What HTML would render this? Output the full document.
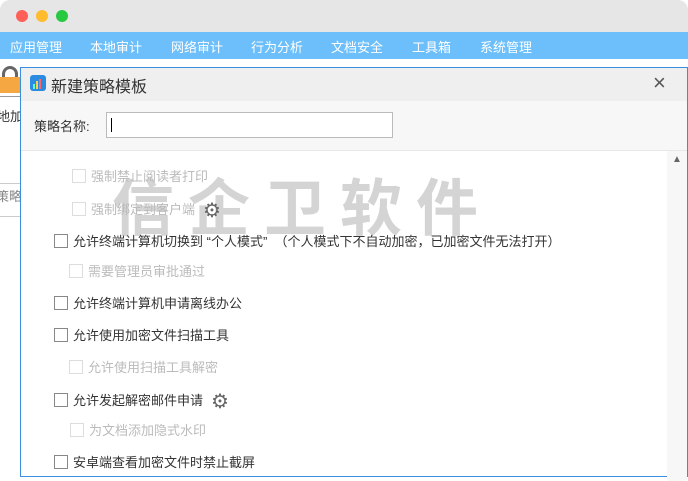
<!DOCTYPE html>
<html><head><meta charset="utf-8"><style>
*{margin:0;padding:0;box-sizing:border-box}
body{width:688px;height:475px;overflow:hidden;background:#fff;font-family:"Liberation Sans","Noto Sans CJK SC",sans-serif;position:relative}
.abs{position:absolute}
.top{left:0;top:0;width:688px;height:32px;background:#e6e6e6;border-radius:10px 10px 0 0}
.dot{width:12px;height:12px;border-radius:50%;top:10px}
.nav{left:0;top:32px;width:688px;height:27px;background:#6cbffa}
.nav span{position:absolute;top:5px;color:#fff;font-size:13px}
.dlg{left:20px;top:67px;width:668px;height:410px;border:1px solid #3a8ee0;background:#fff}
.row{position:absolute;font-size:13px;color:#333;white-space:pre}
.row i{display:inline-block;width:14px;height:14px;border:1px solid #888;vertical-align:-2px;margin-right:5px;background:#fff}
.dis{color:#bbb}
.dis i{border-color:#ddd}
.gear{display:inline-block;font-size:20px;color:#666;vertical-align:-3px;margin-left:8px}
</style></head><body>
<div class="abs top"></div>
<div class="abs dot" style="left:16px;background:#fe5f57"></div>
<div class="abs dot" style="left:36px;background:#febc2e"></div>
<div class="abs dot" style="left:56px;background:#28c840"></div>
<div class="abs nav">
<span style="left:10px">应用管理</span><span style="left:90px">本地审计</span><span style="left:171px">网络审计</span><span style="left:251px">行为分析</span><span style="left:331px">文档安全</span><span style="left:412px">工具箱</span><span style="left:480px">系统管理</span>
</div>
<div class="abs" style="left:2px;top:66px;width:16px;height:12px;border:3px solid #666;border-bottom:none;border-radius:8px 8px 0 0"></div>
<div class="abs" style="left:0;top:77px;width:20px;height:16px;background:#f5a742"></div>
<div class="abs" style="left:0;top:96px;width:20px;height:1px;background:#999"></div>
<div class="abs" style="left:-3px;top:106px;font-size:13px;color:#333">地加</div>
<div class="abs" style="left:0;top:183px;width:20px;height:1px;background:#ccc"></div>
<div class="abs" style="left:-4px;top:186px;font-size:13px;color:#888">策略</div>
<div class="abs" style="left:0;top:216px;width:20px;height:1px;background:#ccc"></div>
<div class="abs dlg">
<div class="abs" style="left:0;top:0;width:666px;height:33px;background:#efefef"></div>
<div class="abs" style="left:9px;top:7px;width:16px;height:16px;border-radius:3px;background:#2a8be0"></div>
<div class="abs" style="left:12px;top:16px;width:2px;height:5px;background:#5fd"></div>
<div class="abs" style="left:15px;top:13px;width:2px;height:8px;background:#fc5"></div>
<div class="abs" style="left:18px;top:11px;width:2px;height:10px;background:#f66"></div>
<div class="abs" style="left:30px;top:5px;font-size:16px;color:#333">新建策略模板</div>
<div class="abs" style="left:632px;top:2px;font-size:22px;color:#555;font-weight:300">×</div>
<div class="abs" style="left:0;top:33px;width:666px;height:50px;background:#f7f7f7;border-bottom:1px solid #e8e8e8"></div>
<div class="abs" style="left:13px;top:48px;font-size:13px;color:#333">策略名称:</div>
<div class="abs" style="left:85px;top:44px;width:287px;height:26px;border:1px solid #bbb;background:#fff"></div>
<div class="abs" style="left:90px;top:50px;width:1px;height:14px;background:#000"></div>
<div class="abs" style="left:646px;top:83px;width:20px;height:330px;background:#f7f7f7"></div>
<div class="abs" style="left:651px;top:86px;font-size:10px;color:#666">▲</div>
</div>
<div class="abs" style="left:112px;top:158px;font-size:62px;font-weight:bold;color:rgba(160,160,160,0.45);letter-spacing:14px;white-space:nowrap">信企卫软件</div>
<div class="row dis" style="left:72px;top:166px"><i></i>强制禁止阅读者打印</div>
<div class="row dis" style="left:72px;top:198px"><i></i>强制绑定到客户端<span class="gear">⚙</span></div>
<div class="row" style="left:54px;top:231px"><i></i>允许终端计算机切换到 “个人模式”  （个人模式下不自动加密，已加密文件无法打开）</div>
<div class="row dis" style="left:69px;top:261px"><i></i>需要管理员审批通过</div>
<div class="row" style="left:54px;top:293px"><i></i>允许终端计算机申请离线办公</div>
<div class="row" style="left:54px;top:325px"><i></i>允许使用加密文件扫描工具</div>
<div class="row dis" style="left:69px;top:357px"><i></i>允许使用扫描工具解密</div>
<div class="row" style="left:54px;top:389px"><i></i>允许发起解密邮件申请<span class="gear">⚙</span></div>
<div class="row dis" style="left:70px;top:420px"><i></i>为文档添加隐式水印</div>
<div class="row" style="left:54px;top:452px"><i></i>安卓端查看加密文件时禁止截屏</div>
</body></html>
